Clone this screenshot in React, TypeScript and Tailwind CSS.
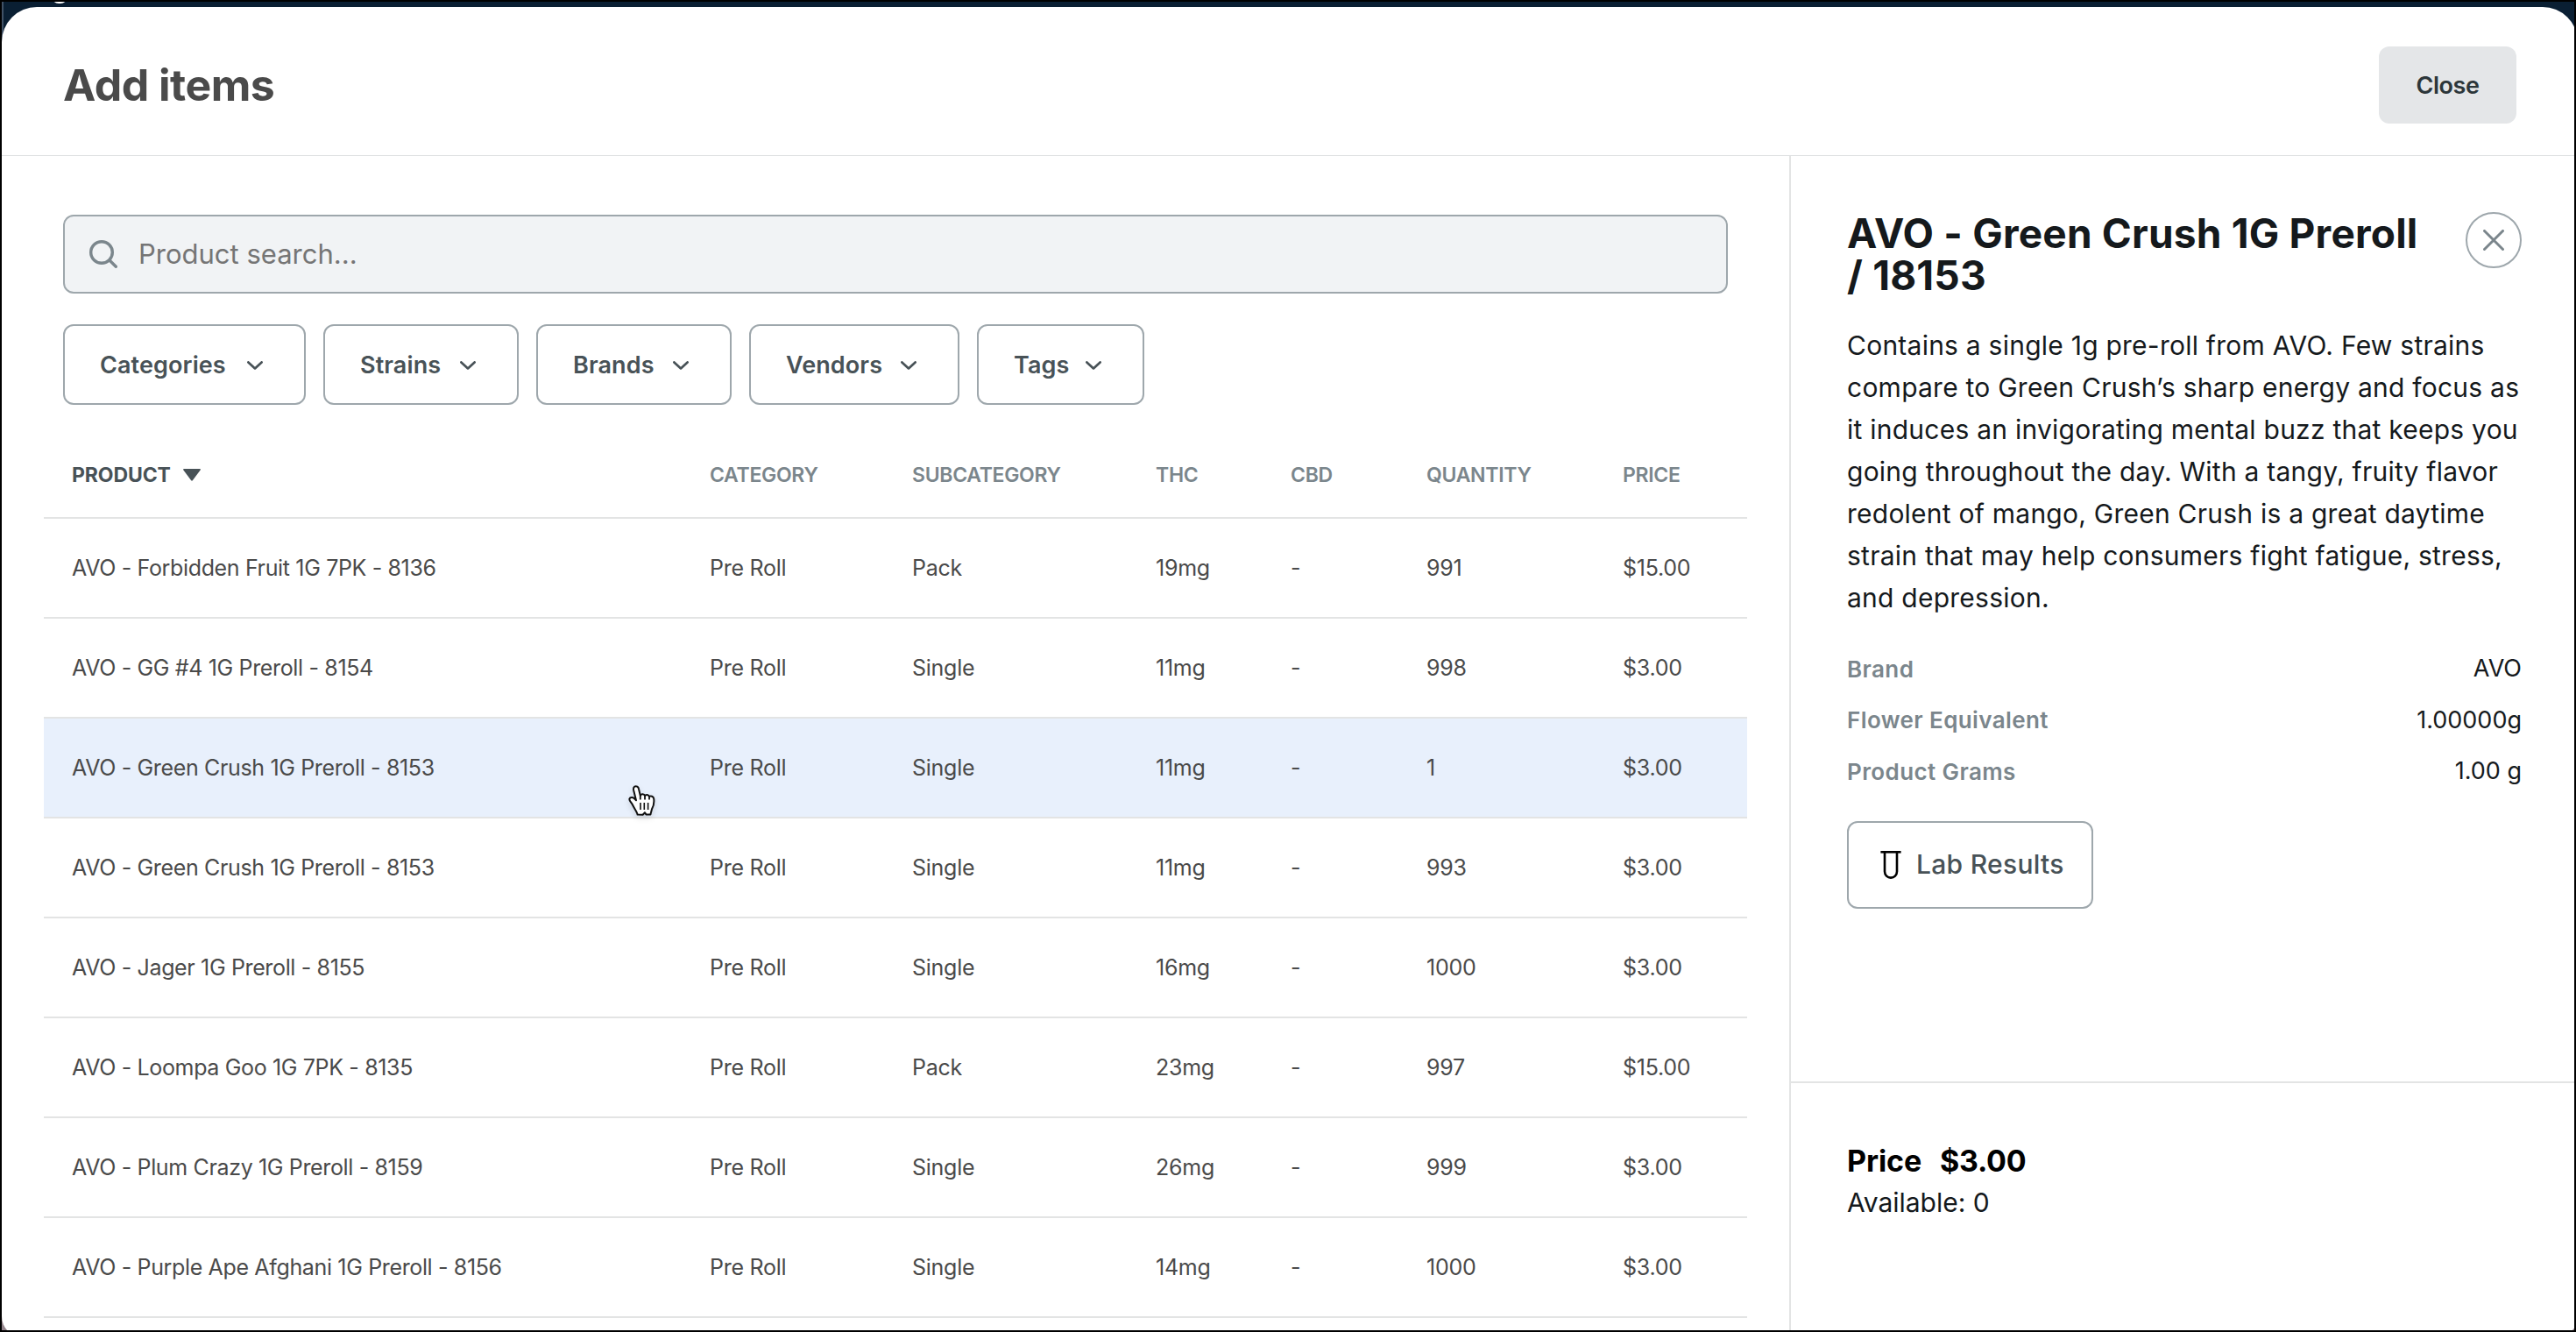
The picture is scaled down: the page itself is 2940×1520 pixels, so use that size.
import React from "react";

interface Product {
  name: string;
  category: string;
  subcategory: string;
  thc: string;
  cbd: string;
  quantity: string;
  price: string;
}

const products: Product[] = [
  { name: "AVO - Forbidden Fruit 1G 7PK - 8136", category: "Pre Roll", subcategory: "Pack", thc: "19mg", cbd: "-", quantity: "991", price: "$15.00" },
  { name: "AVO - GG #4 1G Preroll - 8154", category: "Pre Roll", subcategory: "Single", thc: "11mg", cbd: "-", quantity: "998", price: "$3.00" },
  { name: "AVO - Green Crush 1G Preroll - 8153", category: "Pre Roll", subcategory: "Single", thc: "11mg", cbd: "-", quantity: "1", price: "$3.00" },
  { name: "AVO - Green Crush 1G Preroll - 8153", category: "Pre Roll", subcategory: "Single", thc: "11mg", cbd: "-", quantity: "993", price: "$3.00" },
  { name: "AVO - Jager 1G Preroll - 8155", category: "Pre Roll", subcategory: "Single", thc: "16mg", cbd: "-", quantity: "1000", price: "$3.00" },
  { name: "AVO - Loompa Goo 1G 7PK - 8135", category: "Pre Roll", subcategory: "Pack", thc: "23mg", cbd: "-", quantity: "997", price: "$15.00" },
  { name: "AVO - Plum Crazy 1G Preroll - 8159", category: "Pre Roll", subcategory: "Single", thc: "26mg", cbd: "-", quantity: "999", price: "$3.00" },
  { name: "AVO - Purple Ape Afghani 1G Preroll - 8156", category: "Pre Roll", subcategory: "Single", thc: "14mg", cbd: "-", quantity: "1000", price: "$3.00" },
];

const filters = [
  { label: "Categories", width: "w-[277px]" },
  { label: "Strains", width: "w-[223px]" },
  { label: "Brands", width: "w-[223px]" },
  { label: "Vendors", width: "w-[240px]" },
  { label: "Tags", width: "w-[191px]" },
];

const details = [
  { label: "Brand", value: "AVO" },
  { label: "Flower Equivalent", value: "1.00000g" },
  { label: "Product Grams", value: "1.00 g" },
];

const HIGHLIGHTED_ROW = 2;

const rowGrid = "grid grid-cols-[728px_231px_278px_154px_155px_224px_142px] items-center pl-8 border-b-2 border-[#e3e4e4]";

const SearchIcon = () => (
  <svg className="w-8 h-8 shrink-0" viewBox="0 0 32 32" fill="none" stroke="#7b868c" strokeWidth="3.4" strokeLinecap="round">
    <circle cx="14" cy="14" r="12.3" />
    <path d="M23 23L30.3 30.3" />
  </svg>
);

const ChevronIcon = () => (
  <svg className="w-[18px] h-[10px] shrink-0" viewBox="0 0 18 10" fill="none" stroke="#485257" strokeWidth="2.7" strokeLinecap="round" strokeLinejoin="round">
    <path d="M1.4 1.4L9 8.4L16.6 1.4" />
  </svg>
);

const SortIcon = () => (
  <svg className="w-5 h-[14px]" viewBox="0 0 20 14" fill="#485257">
    <path d="M1 0H19Q20.5 0.4 19.6 1.6L11 13Q10 14.4 9 13L0.4 1.6Q-0.5 0.4 1 0Z" />
  </svg>
);

const TubeIcon = () => (
  <svg className="w-6 h-8 shrink-0" viewBox="0 0 24 32" fill="none" stroke="#000" strokeWidth="2.6">
    <path d="M0.4 1.3H23.6" />
    <path d="M5 1.3V23.6A7 7 0 0 0 19 23.6V1.3" />
  </svg>
);

const CloseIcon = () => (
  <svg className="w-6 h-6" viewBox="0 0 24 24" fill="none" stroke="#7b868c" strokeWidth="3" strokeLinecap="round">
    <path d="M1.5 1.5L22.5 22.5M22.5 1.5L1.5 22.5" />
  </svg>
);

const HandCursor = () => (
  <svg className="absolute left-[716px] top-[894px] w-[36px] h-[39px] drop-shadow-md" viewBox="0 0 36 39">
    <path
      d="M8.2 3.6C10.4 2.4 12.6 4 13 6.2L14.8 14C15.6 11.6 19.4 11.6 20 14.2C21.2 12.2 24.4 12.6 25 15C26.6 13.8 29.8 14.6 30.2 17.4C30.8 21.6 30 25.6 28 29.2L26.4 35.4L21.4 35.4L20 33.2L17.6 35.8L11.6 35.6C11.2 32.6 7.8 28.4 5.6 23.8C4.4 21.6 1.8 19.4 2.4 17.6C3.2 15.4 6.2 15.6 8 17.2L10 19.2L7.2 8C6.8 6.2 6.6 4.6 8.2 3.6Z"
      fill="#fff"
      stroke="#111"
      strokeWidth="2"
      strokeLinejoin="round"
    />
    <path d="M14.8 14V18.4M20 14.4V18.4M25 15V18.6" stroke="#111" strokeWidth="1.8" />
    <path d="M15 22V30M19.3 22V30M23.6 22V30" stroke="#111" strokeWidth="1.6" />
  </svg>
);

const ProductRow: React.FC<{ product: Product; active: boolean }> = ({ product, active }) => (
  <div className={`${rowGrid} h-[114px] pt-[2px] text-[25px] tracking-[-0.25px] text-[#4a4a4a] ${active ? "bg-[#e8f0fc]" : "bg-white"}`}>
    <div className="tracking-[-0.35px]">{product.name}</div>
    <div>{product.category}</div>
    <div>{product.subcategory}</div>
    <div>{product.thc}</div>
    <div>{product.cbd}</div>
    <div>{product.quantity}</div>
    <div>{product.price}</div>
  </div>
);

const ProductDetails = () => (
  <div className="flex flex-col w-[900px] h-full shrink-0 border-l-2 border-[#e3e4e4] text-[#15191c]">
    <div className="flex flex-col h-[1056px] px-16 pt-16">
      <div className="flex justify-between items-start">
        <h2 className="w-[670px] text-[46px] leading-[48px] font-bold tracking-[0.2px]">
          AVO - Green Crush 1G Preroll
          <br />/ 18153
        </h2>
        <button className="flex items-center justify-center w-16 h-16 rounded-full border-2 border-[#9ea7ac]">
          <CloseIcon />
        </button>
      </div>
      <p className="mt-8 -mr-4 text-[30px] leading-[48px] tracking-[0.24px]">
        Contains a single 1g pre-roll from AVO. Few strains
        <br />
        compare to Green Crush’s sharp energy and focus as
        <br />
        it induces an invigorating mental buzz that keeps you
        <br />
        going throughout the day. With a tangy, fruity flavor
        <br />
        redolent of mango, Green Crush is a great daytime
        <br />
        strain that may help consumers fight fatigue, stress,
        <br />
        and depression.
      </p>
      <div className="mt-7">
        {details.map((d) => (
          <div key={d.label} className="flex items-center justify-between h-[58.5px] text-[26px]">
            <span className="font-semibold tracking-[0.4px] text-[#7b868c]">{d.label}</span>
            <span className="text-[27px]">{d.value}</span>
          </div>
        ))}
      </div>
      <button className="flex items-center gap-[17px] mt-[27px] w-[281px] h-[100px] shrink-0 pl-9 rounded-xl border-2 border-[#9ea7ac] text-[30px] font-medium tracking-[0.3px] text-[#485257]">
        <TubeIcon />
        <span>Lab Results</span>
      </button>
    </div>
    <div className="border-t-2 border-[#e3e4e4] px-16 pt-[65px]">
      <div className="flex gap-[21px] text-[34px] leading-[48px] font-bold tracking-[-0.1px] text-black">
        <span>Price</span>
        <span className="tracking-[-0.3px]">$3.00</span>
      </div>
      <div className="text-[30px] leading-[47px]">Available: 0</div>
    </div>
  </div>
);

export default function App() {
  return (
    <div className="relative w-[2940px] h-[1520px] overflow-hidden bg-black p-[2px] font-[Inter,sans-serif]">
      <div className="relative w-[2936px] h-[1516px] overflow-hidden bg-[linear-gradient(#0a1f33_50%,#94858c_50%)] pt-[6px]">
        <div className="absolute left-0 top-0 w-[2px] h-[60px] bg-[#415266]" />
        <div className="absolute left-[57px] -top-[14px] w-[18px] h-[16px] rounded-full bg-white" />
        <div className="relative flex flex-col w-[2940px] h-[1518px] rounded-t-[40px] rounded-b-[24px] bg-white overflow-hidden">
          <div className="flex items-start justify-between h-[170px] shrink-0 pt-[45px] pl-[70px] pr-[70px] border-b border-[#dfe1e3]">
            <h1 className="text-[50px] leading-[88px] font-bold tracking-[-0.5px] text-[#4a4a4a]">Add items</h1>
            <button className="w-[157px] h-[88px] pt-[2px] rounded-xl bg-[#e4e6e8] text-[27px] font-semibold tracking-[-0.4px] text-[#2c363a]">
              Close
            </button>
          </div>
          <div className="flex flex-1 min-h-0">
            <div className="flex flex-col w-[2040px] shrink-0 pt-[67px]">
              <div className="flex items-center gap-6 h-[90px] shrink-0 mx-[70px] pl-7 rounded-xl border-2 border-[#9ea7ac] bg-[#f1f3f5]">
                <SearchIcon />
                <span className="text-[31px] text-[#757575]">Product search...</span>
              </div>
              <div className="flex gap-5 mt-[35px] px-[70px]">
                {filters.map((f) => (
                  <button
                    key={f.label}
                    className={`flex items-center justify-between h-[92px] pt-[2px] pl-10 pr-[47px] rounded-xl border-2 border-[#9ea7ac] text-[27px] font-semibold tracking-[0.1px] text-[#485257] ${f.width}`}
                  >
                    <span>{f.label}</span>
                    <ChevronIcon />
                  </button>
                ))}
              </div>
              <div className="mt-8 mx-12">
                <div className={`${rowGrid} h-[98px] text-[23px] font-semibold tracking-[-0.3px] text-[#7b868c]`}>
                  <div className="flex items-center gap-[14px] font-bold tracking-[-0.1px] text-[#485257]">
                    <span>PRODUCT</span>
                    <SortIcon />
                  </div>
                  <div>CATEGORY</div>
                  <div>SUBCATEGORY</div>
                  <div>THC</div>
                  <div>CBD</div>
                  <div>QUANTITY</div>
                  <div>PRICE</div>
                </div>
                {products.map((p, i) => (
                  <ProductRow key={i} product={p} active={i === HIGHLIGHTED_ROW} />
                ))}
              </div>
            </div>
            <ProductDetails />
          </div>
        </div>
      </div>
      <HandCursor />
    </div>
  );
}
